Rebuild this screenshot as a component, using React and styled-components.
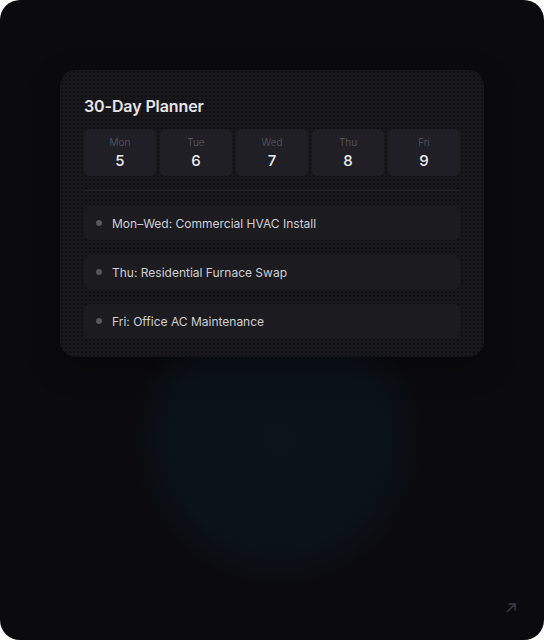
import styled, { createGlobalStyle } from "styled-components";

const Global = createGlobalStyle`
  html, body {
    margin: 0;
    padding: 0;
    background: #ffffff;
  }
  body {
    font-family: Inter, "Noto Sans", sans-serif;
  }
`;

const Frame = styled.div`
  position: relative;
  width: 544px;
  height: 640px;
  box-sizing: border-box;
  border-radius: 20px;
  overflow: hidden;
  background:
    radial-gradient(circle 145px at 278px 440px, rgba(11, 20, 28, 0.9) 0%, rgba(11, 20, 28, 0.75) 75%, rgba(11, 11, 15, 0) 100%),
    #0b0b0f;
  padding: 70px 60px 0;
`;

const Panel = styled.section`
  background-color: #18181c;
  background-image: radial-gradient(rgba(0, 0, 0, 0.35) 0.8px, transparent 0.9px);
  background-size: 4px 4px;
  border-radius: 16px;
  padding: 26px 24px 19px;
  box-shadow: 0 10px 30px rgba(0, 0, 0, 0.4);
`;

const Title = styled.h2`
  margin: 0 0 13px;
  font-size: 16px;
  font-weight: 600;
  color: #e6e6ea;
  letter-spacing: -0.1px;
  line-height: 20px;
`;

const Days = styled.div`
  display: grid;
  grid-template-columns: repeat(5, 1fr);
  gap: 4px;
  padding-bottom: 14px;
  border-bottom: 1px solid #24242a;
`;

const Day = styled.div`
  height: 47px;
  border-radius: 6px;
  background: #1f1f25;
  display: flex;
  flex-direction: column;
  align-items: center;
  justify-content: center;
  gap: 4px;
`;

const DayName = styled.span`
  font-size: 10px;
  font-weight: 300;
  color: #5c5c66;
  line-height: 12px;
`;

const DayNum = styled.span`
  font-size: 15px;
  font-weight: 500;
  color: #ececef;
  line-height: 17px;
`;

const Jobs = styled.ul`
  list-style: none;
  margin: 15px 0 0;
  padding: 0;
  display: flex;
  flex-direction: column;
  gap: 15px;
`;

const Job = styled.li`
  height: 34px;
  border-radius: 6px;
  background: #1b1b20;
  display: flex;
  align-items: center;
  padding: 0 12px;
  gap: 10px;
  font-size: 12px;
  color: #cfcfd4;
`;

const Dot = styled.span`
  width: 6px;
  height: 6px;
  border-radius: 50%;
  background: #56565e;
  flex: none;
`;

const Corner = styled.div`
  position: absolute;
  right: 27px;
  bottom: 26px;
  color: #3d3d47;
  display: flex;
`;

const days = [
  ["Mon", 5],
  ["Tue", 6],
  ["Wed", 7],
  ["Thu", 8],
  ["Fri", 9],
];

const jobs = [
  "Mon–Wed: Commercial HVAC Install",
  "Thu: Residential Furnace Swap",
  "Fri: Office AC Maintenance",
];

export default function App() {
  return (
    <>
      <Global />
      <Frame>
        <Panel>
          <Title>30-Day Planner</Title>
          <Days>
            {days.map(([name, num]) => (
              <Day key={name}>
                <DayName>{name}</DayName>
                <DayNum>{num}</DayNum>
              </Day>
            ))}
          </Days>
          <Jobs>
            {jobs.map((j) => (
              <Job key={j}>
                <Dot />
                {j}
              </Job>
            ))}
          </Jobs>
        </Panel>
        <Corner>
          <svg width="12" height="12" viewBox="0 0 12 12" fill="none" stroke="currentColor" strokeWidth="1.4">
            <path d="M2 10 L10 2" />
            <path d="M3.5 2 H10 V8.5" />
          </svg>
        </Corner>
      </Frame>
    </>
  );
}
